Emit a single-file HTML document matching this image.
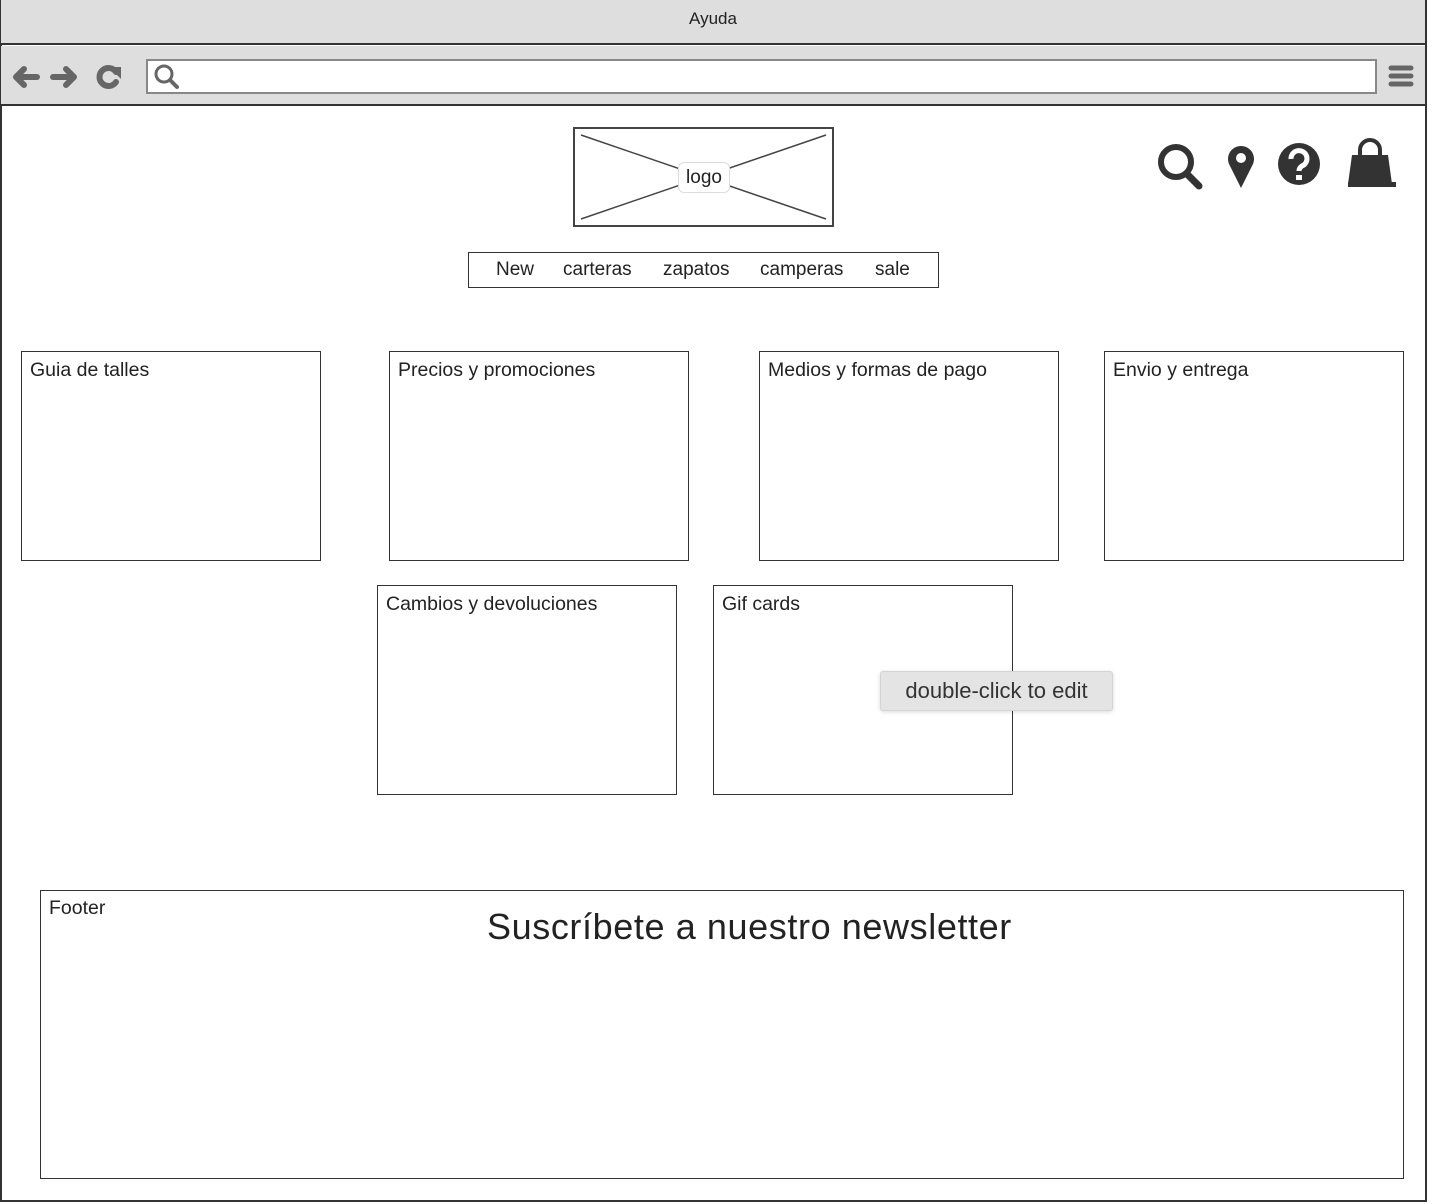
<!DOCTYPE html>
<html><head><meta charset="utf-8"><style>
*{margin:0;padding:0;box-sizing:border-box}
body{width:1432px;height:1204px;background:#fff;position:relative;overflow:hidden;font-family:"Liberation Sans",sans-serif;color:#222}
.a{position:absolute}
.box{position:absolute;border:1px solid #333;background:#fff}
.box span{position:absolute;left:8px;top:7px;font-size:19.5px}
</style></head><body>
<div class="a" style="left:0;top:0;width:1427px;height:1202px;border:2px solid #333;border-top:1px solid #333"></div>
<div class="a" style="left:1px;top:0;width:1424px;height:45px;background:#dedede;border-bottom:2px solid #333;text-align:center;line-height:38px;font-size:17px">Ayuda</div>
<div class="a" style="left:1px;top:46px;width:1424px;height:60px;background:#dedede;border-bottom:2px solid #333"></div>
<svg class="a" style="left:10px;top:60px" width="120" height="34" viewBox="0 0 120 34">
<g stroke="#666" stroke-width="6" stroke-linecap="round" stroke-linejoin="round" fill="none">
<path d="M27 17H6M14 9L6 17L14 25"/><path d="M43 17H64M56 9L64 17L56 25"/>
<path d="M106 12A9 9 0 1 0 106 22"/></g>
<path d="M99 7L111 7L111 19Z" fill="#666"/></svg>
<div class="a" style="left:146px;top:59px;width:1231px;height:35px;background:#fff;border:2px solid #888"></div>
<svg class="a" style="left:152px;top:62px" width="30" height="30"><circle cx="12" cy="12" r="8" stroke="#666" stroke-width="3" fill="none"/><path d="M18 18L25 25" stroke="#666" stroke-width="4" stroke-linecap="round"/></svg>
<svg class="a" style="left:1388px;top:64px" width="28" height="26"><g stroke="#666" stroke-width="5" stroke-linecap="round"><path d="M3 4H23M3 12H23M3 20H23"/></g></svg>
<div class="a" style="left:573px;top:127px;width:261px;height:100px;border:2px solid #444"></div>
<svg class="a" style="left:573px;top:127px" width="261" height="100"><path d="M8 8L253 92M8 92L253 8" stroke="#444" stroke-width="1.5"/></svg>
<div class="a" style="left:678px;top:162px;width:52px;height:31px;background:#fff;border:1px solid #ddd;border-radius:6px;text-align:center;line-height:30px;font-size:19px">logo</div>
<svg class="a" style="left:1150px;top:138px" width="260" height="56" viewBox="0 0 260 56">
<circle cx="26" cy="24" r="15" stroke="#333" stroke-width="6" fill="none"/><path d="M37 36L49 48" stroke="#333" stroke-width="7" stroke-linecap="round"/>
<path d="M91 50L79 26A13 13 0 1 1 103 26Z" fill="#333"/><circle cx="91" cy="20" r="5" fill="#fff"/>
<circle cx="149" cy="26" r="21" fill="#333"/><path d="M141 21A8 8 0 1 1 152 28Q149 30 149 33" stroke="#fff" stroke-width="5" fill="none"/><rect x="146" y="37" width="6" height="5" fill="#fff"/>
<path d="M210 20V12A10 10 0 0 1 230 12V20" stroke="#333" stroke-width="4" fill="none"/>
<path d="M202 17H238L242 46H198Z" fill="#333"/><rect x="198" y="44" width="48" height="5" fill="#333"/></svg>
<div class="a" style="left:468px;top:252px;width:471px;height:36px;border:1.5px solid #333;font-size:19px;line-height:34px">
<span class="a" style="left:27px">New</span><span class="a" style="left:94px">carteras</span><span class="a" style="left:194px">zapatos</span><span class="a" style="left:291px">camperas</span><span class="a" style="left:406px">sale</span></div>
<div class="box" style="left:21px;top:351px;width:300px;height:210px"><span>Guia de talles</span></div>
<div class="box" style="left:389px;top:351px;width:300px;height:210px"><span>Precios y promociones</span></div>
<div class="box" style="left:759px;top:351px;width:300px;height:210px"><span>Medios y formas de pago</span></div>
<div class="box" style="left:1104px;top:351px;width:300px;height:210px"><span>Envio y entrega</span></div>
<div class="box" style="left:377px;top:585px;width:300px;height:210px"><span>Cambios y devoluciones</span></div>
<div class="box" style="left:713px;top:585px;width:300px;height:210px"><span>Gif cards</span></div>
<div class="a" style="left:880px;top:671px;width:233px;height:40px;background:#e4e4e4;border:1px solid #d4d4d4;border-radius:3px;box-shadow:0 1px 4px rgba(0,0,0,.15);font-size:22px;line-height:38px;text-align:center;color:#333">double-click to edit</div>
<div class="box" style="left:40px;top:890px;width:1364px;height:289px"><span style="top:6px">Footer</span>
<div class="a" style="left:446px;top:15px;font-size:36px;letter-spacing:0.6px;white-space:nowrap">Suscríbete a nuestro newsletter</div></div>
</body></html>
